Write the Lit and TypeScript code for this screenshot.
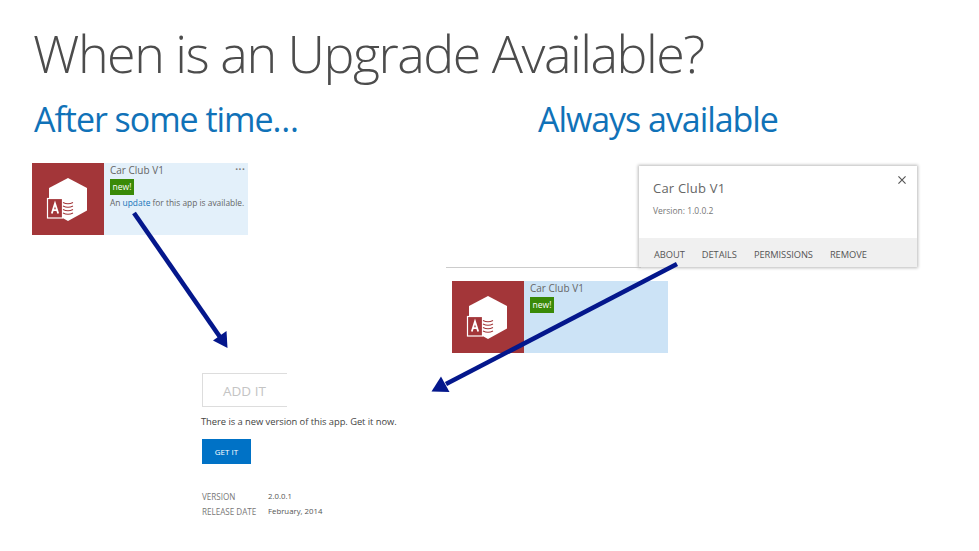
import { LitElement, html, css, svg } from "lit";
import { customElement } from "lit/decorators.js";

const accessIcon = () => html`<svg class="icon" viewBox="0 0 72 72" aria-hidden="true">
  <path fill="#fff" d="M36 15 L55 25 V47.500 L36 58 L17 47.500 V25 Z"/>
  <rect x="15.500" y="35.500" width="15" height="19.500" fill="#a33639" stroke="#fff" stroke-width="1.200"/>
  <path fill="#fff" d="M30.500 38 H41 V52 H30.500 Z"/>
  <path fill="none" stroke="#a33639" stroke-width="1.100" d="M31 39.500 Q36 42 41 39.500 M31 43 Q36 45.500 41 43 M31 46.500 Q36 49 41 46.500 M31 50 Q36 52.500 41 50"/>
  <path fill="none" stroke="#fff" stroke-width="1.800" d="M19.800 50.500 L23 40.500 L26.200 50.500 M20.800 47.200 H25.200"/>
</svg>`;

@customElement("app-root")
export class AppRoot extends LitElement {
  static styles = css`
    :host { display: block; width: 979px; height: 551px; overflow: hidden; background: #fff; font-family: "Open Sans", "Noto Sans", sans-serif; }
    .slide { position: relative; width: 979px; height: 551px; }
    .slide > * { position: absolute; margin: 0; }
    h1 { left: 33px; top: 20px; font-size: 52px; line-height: 66px; font-weight: 300; color: #4c4c4c; letter-spacing: -1.500px; white-space: nowrap; }
    h2 { top: 96px; font-size: 34px; line-height: 46px; font-weight: 400; color: #1072b8; letter-spacing: -1.050px; white-space: nowrap; }
    .h2a { left: 34px; }
    .h2b { left: 538px; }
    .tile { display: grid; grid-template-columns: 72px 1fr; width: 216px; height: 72px; color: #555; }
    .tile1 { left: 32px; top: 163px; background: #e3f0fa; }
    .tile2 { left: 452px; top: 281px; background: #cce3f6; }
    .thumb { background: #a33639; width: 72px; height: 72px; }
    .icon { display: block; width: 72px; height: 72px; }
    .info { padding: 0 6px; display: flex; flex-direction: column; align-items: flex-start; font-size: 9px; position: relative; }
    .name { font-size: 10px; line-height: 14px; color: #666; }
    .badge { background: #3a8a08; color: #fff; height: 16px; width: 24px; margin-top: 2px; font-size: 8.500px; line-height: 15px; text-align: center; }
    .msg { font-size: 8.400px; line-height: 12px; margin-top: 2px; color: #666; white-space: nowrap; }
    .msg a { color: #1272b8; }
    .more { position: absolute; right: 3px; top: 0; width: 12px; font-size: 10px; line-height: 12px; color: #777; letter-spacing: .5px; font-weight: 700; overflow: hidden; }
    .rule { left: 446px; top: 267px; width: 195px; height: 1px; background: #ccc; }
    .dialog { left: 639px; top: 166px; width: 278px; height: 101px; background: #fff; box-shadow: 0 0 3px 1px #bbb; display: grid; grid-template-rows: 1fr 29px; }
    .body { padding: 13px 14px 0; position: relative; }
    .title { font-size: 13px; line-height: 18px; color: #666; letter-spacing: .2px; }
    .ver { font-size: 8.500px; line-height: 12px; margin-top: 8px; color: #777; }
    .close { position: absolute; right: 11px; top: 10px; width: 8px; height: 8px; }
    .tabs { background: #f0f0f0; display: flex; gap: 17px; align-items: center; padding: 3px 15px 0; font-size: 9.300px; color: #555; letter-spacing: -.05px; }
    .addit { left: 202px; top: 373px; width: 85px; height: 34px; box-sizing: border-box; border: 1px solid #ddd; border-right: 0; color: #c4c4c4; font-size: 13.500px; line-height: 34px; padding-left: 20px; }
    .line { left: 201px; top: 415px; font-size: 9.400px; line-height: 14px; color: #444; white-space: nowrap; letter-spacing: -.05px; }
    .get { left: 202px; top: 439px; width: 49px; height: 25px; background: #0072c6; color: #fff; font-size: 8px; line-height: 25px; text-align: center; }
    .meta { left: 202px; top: 490px; display: grid; grid-template-columns: 66px auto; row-gap: 2px; font-size: 8.100px; line-height: 13px; color: #777; }
    .meta b { font-weight: 400; color: #555; font-size: 7.800px; }
    .arrows { left: 0; top: 0; width: 979px; height: 551px; pointer-events: none; }
  `;

  private tile(cls: string, msg: boolean) {
    return html`<div class="tile ${cls}">
      <div class="thumb">${accessIcon()}</div>
      <div class="info">
        <span class="name">Car Club V1</span>
        <span class="badge">new!</span>
        ${msg ? html`<span class="msg">An <a>update</a> for this app is available.</span><span class="more">···</span>` : ""}
      </div>
    </div>`;
  }

  render() {
    return html`<div class="slide">
      <h1>When is an Upgrade Available?</h1>
      <h2 class="h2a">After some time…</h2>
      <h2 class="h2b">Always available</h2>
      ${this.tile("tile1", true)}
      <div class="rule"></div>
      <div class="dialog">
        <div class="body">
          <div class="title">Car Club V1</div>
          <div class="ver">Version: 1.0.0.2</div>
          <svg class="close" viewBox="0 0 9 9"><path d="M.5 .5 L8.500 8.500 M8.500 .5 L.5 8.500" stroke="#555" stroke-width="1.300"/></svg>
        </div>
        <div class="tabs"><span>ABOUT</span><span>DETAILS</span><span>PERMISSIONS</span><span>REMOVE</span></div>
      </div>
      ${this.tile("tile2", false)}
      <div class="addit">ADD IT</div>
      <div class="line">There is a new version of this app. Get it now.</div>
      <div class="get">GET IT</div>
      <div class="meta"><span>VERSION</span><b>2.0.0.1</b><span>RELEASE DATE</span><b>February, 2014</b></div>
      <svg class="arrows" viewBox="0 0 979 551" aria-hidden="true">
        ${svg`<g fill="#04178c" stroke="#04178c">
          <path fill="none" stroke-width="4.600" d="M134 213 L220 337"/>
          <path stroke="none" d="M227.500 348 L213 340.500 L226.500 331 Z"/>
          <path fill="none" stroke-width="4.600" d="M677 264 L446 384"/>
          <path stroke="none" d="M431.500 391.500 L441 376.500 L449.500 392 Z"/>
        </g>`}
      </svg>
    </div>`;
  }
}
